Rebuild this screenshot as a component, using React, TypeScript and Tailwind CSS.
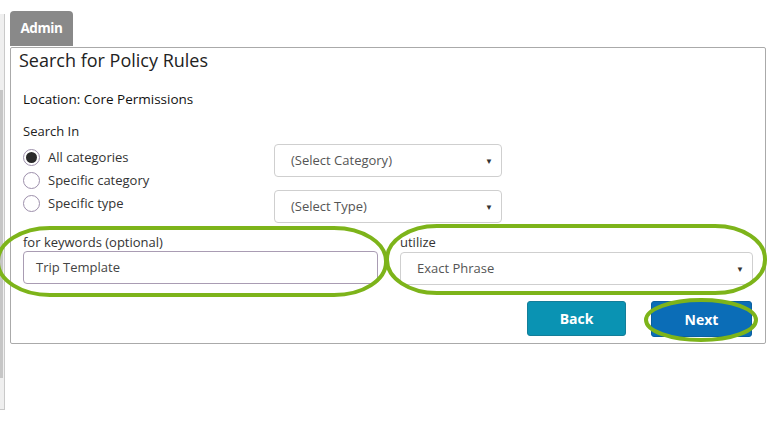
import React from 'react';

const Radio: React.FC<{ checked?: boolean; label: string }> = ({ checked, label }) => (
  <label className="flex items-center h-[23px] gap-[8px]">
    <span className="w-[17px] h-[17px] rounded-full border border-[#9d8fab] bg-white flex items-center justify-center">
      {checked && <span className="w-[11px] h-[11px] rounded-full bg-[#2b2b2b]" />}
    </span>
    <span>{label}</span>
  </label>
);

const Select: React.FC<{ text: string; className?: string }> = ({ text, className }) => (
  <div
    className={`h-[33px] border border-[#cfcfcf] rounded-[4px] bg-white flex items-center justify-between pl-[16px] pr-[8px] text-[#555] ${className ?? ''}`}
  >
    <span>{text}</span>
    <span className="text-[8px] text-[#333]">▼</span>
  </div>
);

const App: React.FC = () => {
  return (
    <div
      className="relative w-[767px] h-[430px] bg-white overflow-hidden text-[13px] text-[#333]"
      style={{ fontFamily: '"Open Sans", "Liberation Sans", sans-serif' }}
    >
      <div className="flex">
        {/* left side rail */}
        <div className="mt-[14px] w-[5px] h-[396px] bg-[#efefef] border-r border-b border-[#c9c9c9] pt-[76px]">
          <div className="w-[3px] h-[288px] bg-[#c6c6c6]" />
        </div>

        <div className="ml-[5px] pt-[11px] w-[756px]">
          <div className="w-[63px] h-[35px] bg-[#898989] rounded-t-[4px] flex items-center justify-center text-white font-bold text-[13.5px] tracking-[-0.4px]">
            Admin
          </div>

          <div className="mt-[1px] h-[297px] border border-[#aaa] rounded-[2px] pl-[12px] pr-[12px]">
            <h1 className="-ml-[4px] text-[18px] leading-[24px] text-[#222]">Search for Policy Rules</h1>

            <div className="mt-[18px] leading-[18px] text-[13.5px] font-medium text-[#111]">Location: Core Permissions</div>

            <div className="mt-[14px] leading-[18px] text-[#222]">Search In</div>

            <div className="mt-[4px] flex">
              <div className="w-[251px] pt-[2px] flex flex-col">
                <Radio checked label="All categories" />
                <Radio label="Specific category" />
                <Radio label="Specific type" />
              </div>
              <div className="w-[228px] flex flex-col gap-[13px]">
                <Select text="(Select Category)" />
                <Select text="(Select Type)" />
              </div>
            </div>

            <div className="mt-[10px] flex gap-[22px]">
              <div className="w-[355px]">
                <div className="leading-[18px]">for keywords (optional)</div>
                <div className="h-[33px] border border-[#a99cb3] rounded-[4px] flex items-center pl-[12px] text-[#444]">
                  Trip Template
                </div>
              </div>
              <div className="w-[353px]">
                <div className="leading-[18px]">utilize</div>
                <Select text="Exact Phrase" className="mt-[1px]" />
              </div>
            </div>

            <div className="mt-[16px] flex justify-end gap-[25px] pr-[1px]">
              <button className="w-[99px] h-[35px] rounded-[3px] bg-[#0a93b3] border border-[#137e99] text-white font-bold text-[14px]">
                Back
              </button>
              <button className="w-[101px] h-[36px] rounded-[3px] bg-[#0b6db7] border border-[#0a5f9f] text-white font-bold text-[14px]">
                Next
              </button>
            </div>
          </div>
        </div>
      </div>

      {/* annotation highlights */}
      <svg className="absolute inset-0 pointer-events-none" width="767" height="430">
        <g fill="none" stroke="#7db41a" strokeWidth="4">
          <rect x="-2" y="228" width="388" height="67" rx="52" ry="33" />
          <rect x="387" y="226" width="378" height="67" rx="50" ry="33" />
          <ellipse cx="701" cy="320" rx="55" ry="20" />
        </g>
      </svg>
    </div>
  );
};

export default App;
